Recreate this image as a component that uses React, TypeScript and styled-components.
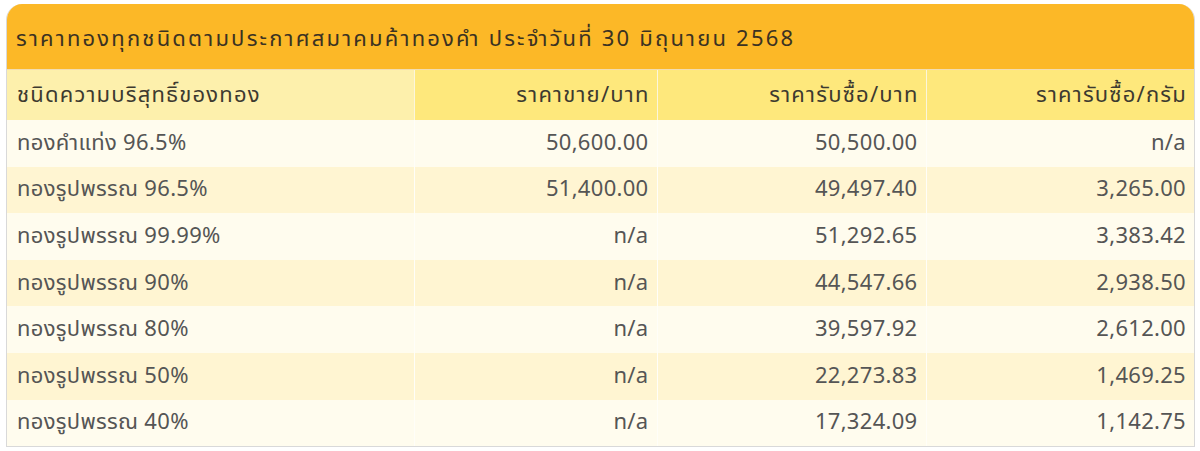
import React from "react"
import styled, { createGlobalStyle } from "styled-components"

const GlobalStyle = createGlobalStyle`
  html, body {
    margin: 0;
    padding: 0;
    background: #ffffff;
  }
  body {
    font-family: Tahoma, "Noto Sans Thai", "Noto Sans", "DejaVu Sans", sans-serif;
  }
`

const Card = styled.div`
  width: 1187px;
  margin: 4px 0 0 6px;
  border: 1px solid #d9d9d9;
  border-top: none;
  border-radius: 16px 16px 0 0;
  overflow: hidden;
  background: #fffcee;
`

const Title = styled.div`
  height: 66px;
  display: flex;
  align-items: center;
  padding: 6px 9px 0;
  box-sizing: border-box;
  background: #fcb827;
  color: #3b3222;
  font-size: 22px;
  letter-spacing: 2.2px;
  border-bottom: 1px solid #f3ddb0;
`

const Table = styled.table`
  width: 100%;
  border-collapse: collapse;
  table-layout: fixed;
`

const HeadCell = styled.th<{ $first?: boolean }>`
  height: 50px;
  padding: 0 7px 0 10px;
  font-weight: normal;
  font-size: 22px;
  letter-spacing: 1.2px;
  color: #3d3a30;
  text-align: ${(p) => (p.$first ? "left" : "right")};
  background: ${(p) => (p.$first ? "#fdf0ac" : "#fee87c")};
  border-left: 1px solid #fbf6dc;
  &:first-child {
    border-left: none;
  }
`

const Row = styled.tr<{ $even: boolean }>`
  background: ${(p) => (p.$even ? "#fff5d2" : "#fffcee")};
`

const Cell = styled.td<{ $first?: boolean }>`
  height: 46.6px;
  padding: 0 8px 0 10px;
  font-size: 22px;
  letter-spacing: 0.3px;
  color: #555555;
  text-align: ${(p) => (p.$first ? "left" : "right")};
  border-left: 1px solid #fffef8;
  &:first-child {
    border-left: none;
  }
`

const rows: [string, string, string, string][] = [
  ["ทองคำแท่ง 96.5%", "50,600.00", "50,500.00", "n/a"],
  ["ทองรูปพรรณ 96.5%", "51,400.00", "49,497.40", "3,265.00"],
  ["ทองรูปพรรณ 99.99%", "n/a", "51,292.65", "3,383.42"],
  ["ทองรูปพรรณ 90%", "n/a", "44,547.66", "2,938.50"],
  ["ทองรูปพรรณ 80%", "n/a", "39,597.92", "2,612.00"],
  ["ทองรูปพรรณ 50%", "n/a", "22,273.83", "1,469.25"],
  ["ทองรูปพรรณ 40%", "n/a", "17,324.09", "1,142.75"]
]

const App: React.FC = () => {
  return (
    <>
      <GlobalStyle />
      <Card>
        <Title>
          ราคาทองทุกชนิดตามประกาศสมาคมค้าทองคำ ประจำวันที่ 30 มิถุนายน 2568
        </Title>
        <Table>
          <colgroup>
            <col style={{ width: 407 }} />
            <col style={{ width: 243 }} />
            <col style={{ width: 269 }} />
            <col />
          </colgroup>
          <thead>
            <tr>
              <HeadCell $first>ชนิดความบริสุทธิ์ของทอง</HeadCell>
              <HeadCell>ราคาขาย/บาท</HeadCell>
              <HeadCell>ราคารับซื้อ/บาท</HeadCell>
              <HeadCell>ราคารับซื้อ/กรัม</HeadCell>
            </tr>
          </thead>
          <tbody>
            {rows.map((r, i) => (
              <Row key={r[0]} $even={i % 2 === 1}>
                <Cell $first>{r[0]}</Cell>
                <Cell>{r[1]}</Cell>
                <Cell>{r[2]}</Cell>
                <Cell>{r[3]}</Cell>
              </Row>
            ))}
          </tbody>
        </Table>
      </Card>
    </>
  )
}

export default App
